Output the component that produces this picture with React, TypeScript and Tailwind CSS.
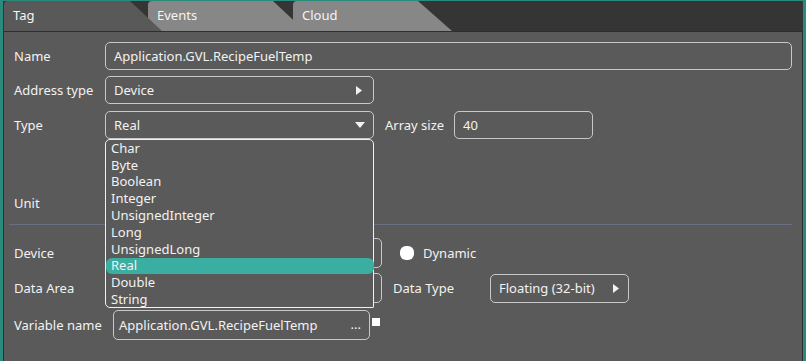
import React from 'react';

const types = ['Char', 'Byte', 'Boolean', 'Integer', 'UnsignedInteger', 'Long', 'UnsignedLong', 'Real', 'Double', 'String'];

function RightArrow() {
    return (
        <svg width="6" height="9" viewBox="0 0 6 9" className="shrink-0">
            <path d="M0 0 L6 4.5 L0 9 Z" fill="#f2f2f2" />
        </svg>
    );
}

function DownArrow() {
    return (
        <svg width="10" height="6" viewBox="0 0 10 6" className="shrink-0">
            <path d="M0 0 L10 0 L5 6 Z" fill="#f2f2f2" />
        </svg>
    );
}

function Tab({ label, className }: { label: string; className: string }) {
    return (
        <div
            className={`relative h-full rounded-tl-[4px] pl-[9px] pt-[5px] text-[13px] text-[#f4f4f4] ${className}`}
        >
            {label}
        </div>
    );
}

export default function App() {
    const selected = 'Real';
    return (
        <div
            className="w-[806px] h-[361px] bg-[#2a8b7d] pt-px pl-[3px] pr-[3px] overflow-hidden flex flex-col"
            style={{ fontFamily: '"Noto Sans", "Open Sans", sans-serif' }}
        >
            {/* tab strip */}
            <div className="h-[30px] bg-[#353535] flex pl-px shrink-0">
                <Tab
                    label="Tag"
                    className="w-[158px] z-20 bg-[#595959] [clip-path:polygon(0_0,calc(100%-32px)_0,100%_100%,0_100%)]"
                />
                <Tab
                    label="Events"
                    className="w-[157px] -ml-[14px] z-0 bg-[#878787] [clip-path:polygon(0_0,calc(100%-32px)_0,100%_100%,0_100%)]"
                />
                <Tab
                    label="Cloud"
                    className="w-[159px] -ml-[12px] z-10 bg-[#878787] [clip-path:polygon(0_0,calc(100%-34px)_0,100%_100%,0_100%)]"
                />
            </div>

            {/* content panel */}
            <div className="flex-1 bg-[#5a5a5a] border-t border-l border-r border-[#2e2e2e] pl-[10px] pr-[5px] flex flex-col text-[13px] text-[#f2f2f2] leading-none">
                {/* Name */}
                <div className="mt-[10px] h-[28px] flex items-center">
                    <span className="w-[91px]">Name</span>
                    <div className="flex-1 h-full mr-[5px] border border-[#c8c8c8] rounded-[5px] flex items-center px-[8px]">
                        Application.GVL.RecipeFuelTemp
                    </div>
                </div>

                {/* Address type */}
                <div className="mt-[6px] h-[28px] flex items-center">
                    <span className="w-[91px]">Address type</span>
                    <div className="w-[269px] h-full border border-[#c8c8c8] rounded-[5px] flex items-center justify-between pl-[8px] pr-[11px]">
                        <span>Device</span>
                        <RightArrow />
                    </div>
                </div>

                {/* Type */}
                <div className="mt-[7px] h-[28px] flex items-center relative z-30">
                    <span className="w-[91px]">Type</span>
                    <div className="relative w-[269px] h-full">
                        <div className="h-full border border-[#c8c8c8] rounded-[5px] flex items-center justify-between pl-[8px] pr-[8px]">
                            <span>Real</span>
                            <DownArrow />
                        </div>
                        {/* open dropdown list */}
                        <div className="absolute left-0 top-full w-[269px] h-[169px] bg-[#5a5a5a] border border-[#f0f0f0] rounded-[5px] rounded-br-[1px] flex flex-col">
                            {types.map((t) => (
                                <div
                                    key={t}
                                    className={`h-[16.8px] shrink-0 flex items-center pl-[5px] ${
                                        t === selected ? 'bg-[#3aafa1] rounded-[6px] -mr-px' : ''
                                    }`}
                                >
                                    {t}
                                </div>
                            ))}
                        </div>
                    </div>
                    <span className="ml-[11px] w-[69px]">Array size</span>
                    <div className="w-[139px] h-full border border-[#c8c8c8] rounded-[5px] flex items-center px-[8px]">
                        40
                    </div>
                </div>

                {/* Unit */}
                <div className="mt-[50px] h-[28px] flex items-center">
                    <span className="w-[91px]">Unit</span>
                    <div className="w-[269px] h-full border border-[#c8c8c8] rounded-[5px]" />
                </div>

                <div className="mt-[7px] h-px bg-[#687080] mr-[5px] -ml-[5px]" />

                {/* Device */}
                <div className="mt-[13px] h-[30px] flex items-center">
                    <span className="w-[91px]">Device</span>
                    <div className="w-[277px] h-full border border-[#c8c8c8] rounded-[5px]" />
                    <div className="ml-[18px] w-[14px] h-[14px] rounded-[6px] bg-white" />
                    <span className="ml-[9px]">Dynamic</span>
                </div>

                {/* Data Area */}
                <div className="mt-[5px] h-[30px] flex items-center">
                    <span className="w-[91px]">Data Area</span>
                    <div className="w-[277px] h-full border border-[#c8c8c8] rounded-[5px]" />
                    <span className="ml-[11px] w-[97px]">Data Type</span>
                    <div className="w-[139px] h-[29px] border border-[#c8c8c8] rounded-[5px] flex items-center justify-between pl-[8px] pr-[9px]">
                        <span>Floating (32-bit)</span>
                        <RightArrow />
                    </div>
                </div>

                {/* Variable name */}
                <div className="mt-[7px] h-[30px] flex items-center">
                    <span className="w-[99px]">Variable name</span>
                    <div className="w-[257px] h-full border border-[#c8c8c8] rounded-[5px] flex items-center justify-between pl-[5px] pr-[8px]">
                        <span>Application.GVL.RecipeFuelTemp</span>
                        <span className="pb-[2px]">...</span>
                    </div>
                    <div className="ml-[2px] mb-[7px] w-[8px] h-[8px] bg-white" />
                </div>
            </div>
        </div>
    );
}
